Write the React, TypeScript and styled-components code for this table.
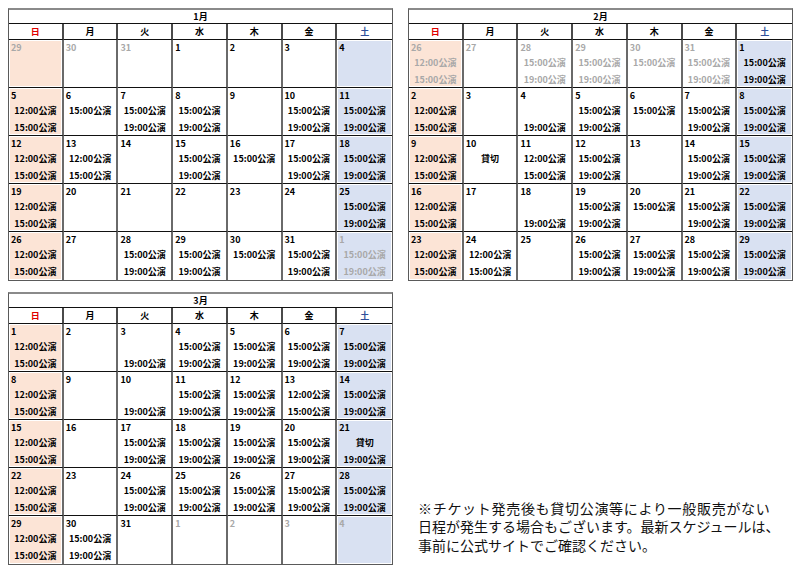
import React from 'react';
import styled, { createGlobalStyle } from 'styled-components';

const Global = createGlobalStyle`
  html, body { margin: 0; padding: 0; background: #fff; }
  body { font-family: "Noto Sans CJK JP", "Noto Sans", sans-serif; color: #000; }
`;

type Tone = 'sun' | 'sat' | 'none';

const SLOT: Record<string, string> = {
  '12': '12:00公演',
  '15': '15:00公演',
  '19': '19:00公演',
  K: '貸切',
};

const Page = styled.div`
  display: grid;
  grid-template-columns: 385px 385px;
  column-gap: 15px;
  row-gap: 11px;
  padding: 8px 0 0 8px;
`;

const Table = styled.div`
  display: grid;
  grid-template-columns: repeat(7, 1fr);
  grid-template-rows: 14px 16px repeat(5, 48px);
  width: 385px;
  box-sizing: border-box;
  border: 1px solid #5a5a5a;
  border-top: 2px solid #8a8a8a;
  font-size: 9px;
  font-weight: 700;
`;

const Title = styled.div`
  grid-column: 1 / -1;
  border-bottom: 1px solid #111;
  text-align: center;
  line-height: 13px;
`;

const toneText = (t: Tone) => (t === 'sun' ? '#e00000' : t === 'sat' ? '#2f4f9a' : '#000');
const toneBg = (t: Tone) => (t === 'sun' ? '#fce4d6' : t === 'sat' ? '#d9e1f2' : '#fff');

const Head = styled.div<{ $tone: Tone; $lastCol: boolean }>`
  box-sizing: border-box;
  border-right: ${(p) => (p.$lastCol ? 'none' : '2px solid #4a4a4a')};
  border-bottom: 1px solid #111;
  color: ${(p) => toneText(p.$tone)};
  text-align: center;
  line-height: 15px;
`;

const Cell = styled.div<{ $tone: Tone; $lastCol: boolean; $lastRow: boolean }>`
  box-sizing: border-box;
  display: grid;
  grid-template-rows: 14px 17px 17px;
  border-right: ${(p) => (p.$lastCol ? 'none' : '2px solid #6a6a6a')};
  border-bottom: ${(p) => (p.$lastRow ? 'none' : '1px solid #111')};
  background: ${(p) => toneBg(p.$tone)};
  box-shadow: ${(p) => (p.$tone === 'none' ? 'none' : 'inset 0 0 0 1px #fff')};
  overflow: hidden;
`;

const DayNum = styled.div<{ $muted: boolean }>`
  padding: 1px 0 0 2px;
  line-height: 13px;
  color: ${(p) => (p.$muted ? '#a8a8a8' : '#000')};
`;

const Slot = styled.div<{ $muted: boolean }>`
  text-align: center;
  line-height: 17px;
  color: ${(p) => (p.$muted ? '#a8a8a8' : '#000')};
  white-space: nowrap;
`;

const Note = styled.div`
  align-self: end;
  margin: 0 0 11px 10px;
  font-size: 14px;
  line-height: 18.5px;
  color: #111;
`;

const NoteLine = styled.div<{ $spacing?: number }>`
  white-space: nowrap;
  letter-spacing: ${(p) => p.$spacing ?? 0}px;
`;

const WEEK: { label: string; tone: Tone }[] = [
  { label: '日', tone: 'sun' },
  { label: '月', tone: 'none' },
  { label: '火', tone: 'none' },
  { label: '水', tone: 'none' },
  { label: '木', tone: 'none' },
  { label: '金', tone: 'none' },
  { label: '土', tone: 'sat' },
];

type Month = { title: string; rows: string[][] };

const JAN: Month = {
  title: '1月',
  rows: [
    ['29m', '30m', '31m', '1', '2', '3', '4'],
    ['5 12 15', '6 15', '7 15 19', '8 15 19', '9', '10 15 19', '11 15 19'],
    ['12 12 15', '13 12 15', '14', '15 15 19', '16 15', '17 15 19', '18 15 19'],
    ['19 12 15', '20', '21', '22', '23', '24', '25 15 19'],
    ['26 12 15', '27', '28 15 19', '29 15 19', '30 15', '31 15 19', '1m 15 19'],
  ],
};

const FEB: Month = {
  title: '2月',
  rows: [
    ['26m 12 15', '27m', '28m 15 19', '29m 15 19', '30m 15', '31m 15 19', '1 15 19'],
    ['2 12 15', '3', '4 - 19', '5 15 19', '6 15', '7 15 19', '8 15 19'],
    ['9 12 15', '10 K', '11 12 15', '12 15 19', '13', '14 15 19', '15 15 19'],
    ['16 12 15', '17', '18 - 19', '19 15 19', '20 15', '21 15 19', '22 15 19'],
    ['23 12 15', '24 12 15', '25', '26 15 19', '27 15 19', '28 15 19', '29 15 19'],
  ],
};

const MAR: Month = {
  title: '3月',
  rows: [
    ['1 12 15', '2', '3 - 19', '4 15 19', '5 15 19', '6 15 19', '7 15 19'],
    ['8 12 15', '9', '10 - 19', '11 15 19', '12 15 19', '13 12 15', '14 15 19'],
    ['15 12 15', '16', '17 15 19', '18 15 19', '19 15 19', '20 15 19', '21 K 19'],
    ['22 12 15', '23', '24 15 19', '25 15 19', '26 15 19', '27 15 19', '28 15 19'],
    ['29 12 15', '30 15 19', '31', '1m', '2m', '3m', '4m'],
  ],
};

const parse = (s: string) => {
  const [d, a, b] = s.split(' ');
  const muted = d.endsWith('m');
  const num = muted ? d.slice(0, -1) : d;
  const slot = (x?: string) => (x && x !== '-' ? SLOT[x] : '');
  return { num, muted, a: slot(a), b: slot(b) };
};

const Calendar: React.FC<{ month: Month }> = ({ month }) => (
  <Table>
    <Title>{month.title}</Title>
    {WEEK.map((w, i) => (
      <Head key={w.label} $tone={w.tone} $lastCol={i === 6}>
        {w.label}
      </Head>
    ))}
    {month.rows.map((row, r) =>
      row.map((s, c) => {
        const d = parse(s);
        return (
          <Cell key={`${r}-${c}`} $tone={WEEK[c].tone} $lastCol={c === 6} $lastRow={r === month.rows.length - 1}>
            <DayNum $muted={d.muted}>{d.num}</DayNum>
            <Slot $muted={d.muted}>{d.a}</Slot>
            <Slot $muted={d.muted}>{d.b}</Slot>
          </Cell>
        );
      })
    )}
  </Table>
);

export default function App() {
  return (
    <>
      <Global />
      <Page>
        <Calendar month={JAN} />
        <Calendar month={FEB} />
        <Calendar month={MAR} />
        <Note>
          <NoteLine $spacing={0.7}>※チケット発売後も貸切公演等により一般販売がない</NoteLine>
          <NoteLine>日程が発生する場合もございます。最新スケジュールは、</NoteLine>
          <NoteLine>事前に公式サイトでご確認ください。</NoteLine>
        </Note>
      </Page>
    </>
  );
}
